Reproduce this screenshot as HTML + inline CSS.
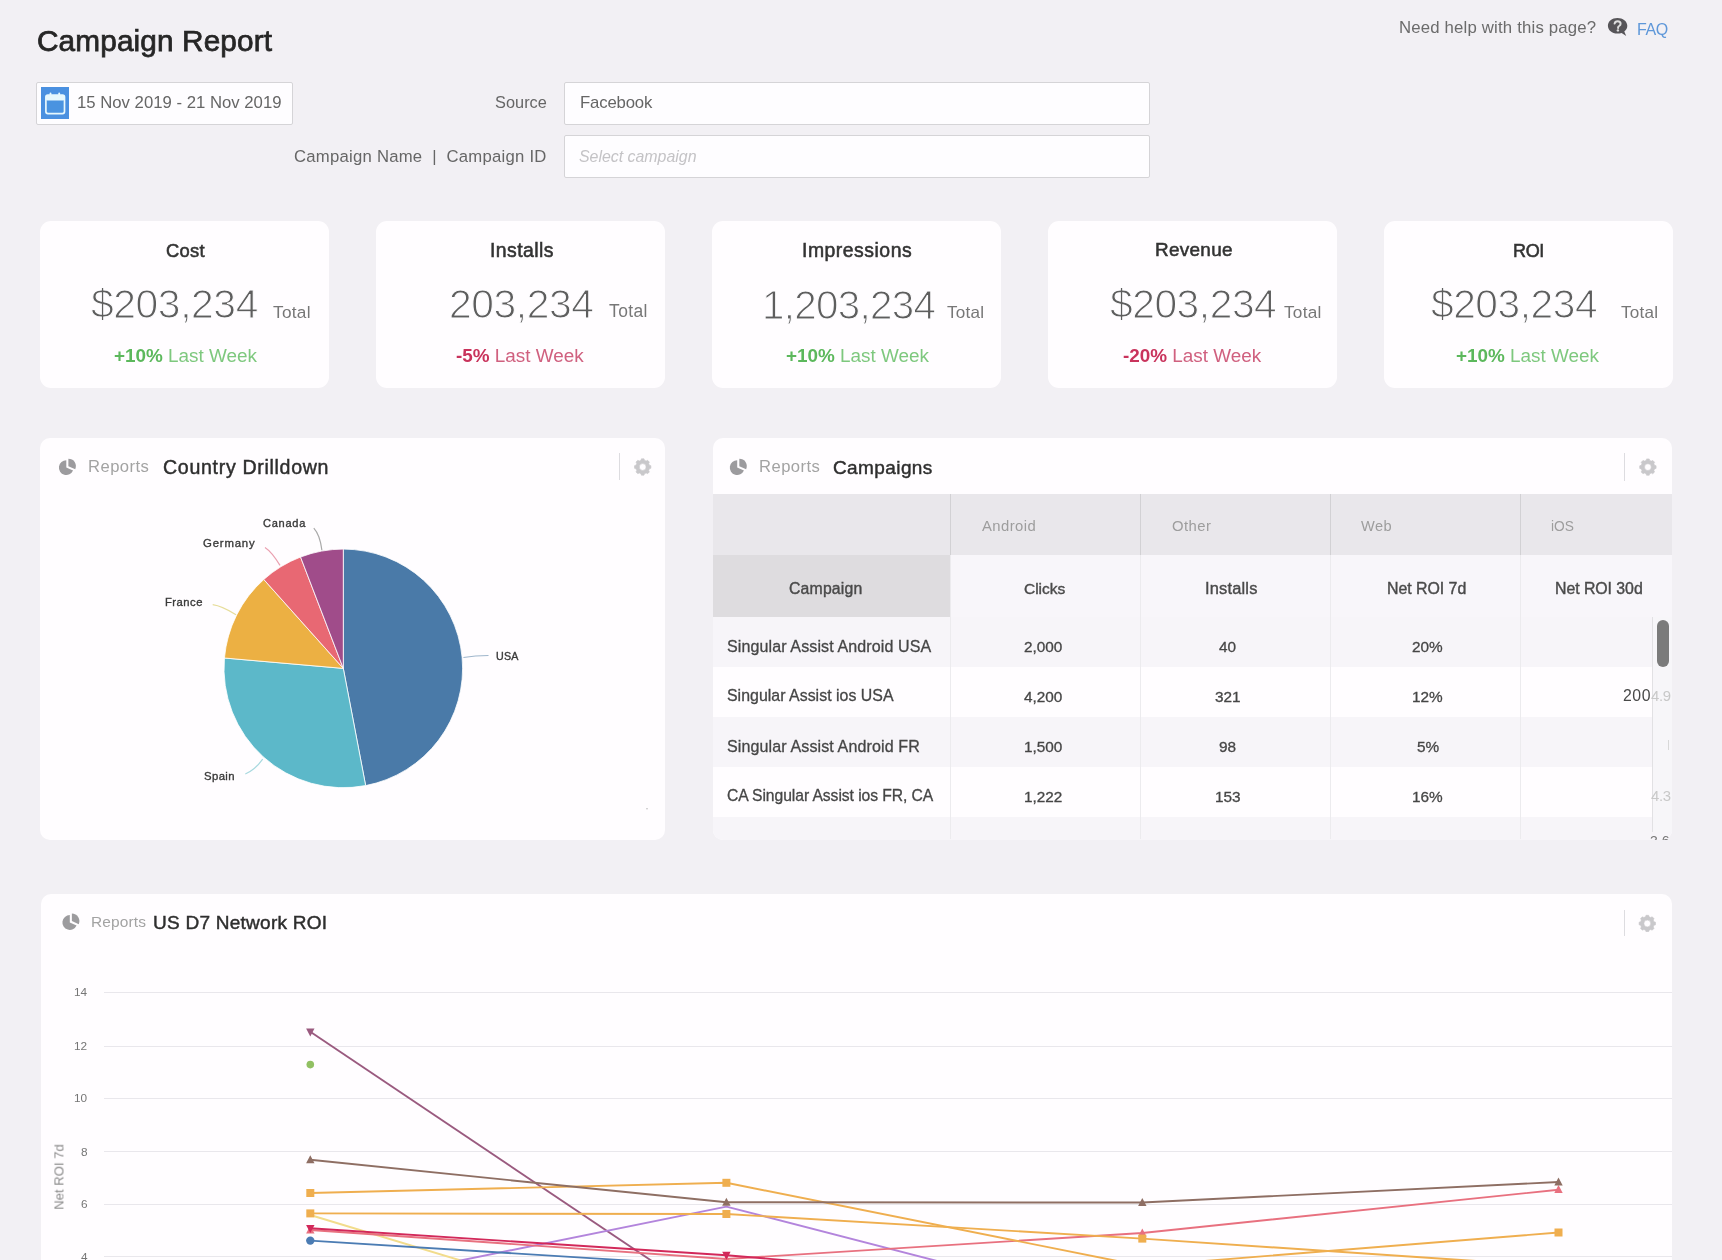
<!DOCTYPE html>
<html><head><meta charset="utf-8"><style>
html,body{margin:0;padding:0;}
body{width:1722px;height:1260px;overflow:hidden;background:#f2f0f4;position:relative;font-family:"Liberation Sans",sans-serif;}
.t{position:absolute;white-space:nowrap;line-height:1;-webkit-font-smoothing:antialiased;will-change:transform;}
.r{position:absolute;}
</style></head><body>
<div class="t" style="left:37.20px;top:26.41px;font-size:29.75px;color:#262626;letter-spacing:0.130px;-webkit-text-stroke:0.75px #262626;">Campaign Report</div>
<div class="t" style="left:1399.00px;top:20.29px;font-size:16.78px;color:#6b6b6b;letter-spacing:0.173px;">Need help with this page?</div>
<svg class="r" style="left:1606px;top:16px;will-change:transform" width="24" height="22" viewBox="0 0 24 22"><path d="M11.4 2C6 2 1.9 5.3 1.9 9.8c0 4.4 4.1 7.8 9.5 7.8 1.6 0 2.9-.3 4.2-.7l4.6 3-1.9-4.4c1.9-1.4 3-3.4 3-5.7C21.3 5.3 16.8 2 11.4 2z" fill="#575559"/><path d="M8.6 7.6c.3-1.6 1.5-2.4 3-2.4 1.8 0 3 1 3 2.5 0 1.2-.7 1.8-1.5 2.3-.7.4-1 .8-1 1.6v.4" stroke="#dedede" stroke-width="2" fill="none" stroke-linecap="round"/><circle cx="11.9" cy="14.4" r="1.2" fill="#dedede"/></svg>
<div class="t" style="left:1637.30px;top:20.93px;font-size:16.03px;color:#5e97d9;letter-spacing:-0.391px;">FAQ</div>
<div class="r" style="left:36px;top:82px;width:257px;height:43px;background:#fefdff;border:1px solid #d5d4d7;box-sizing:border-box;border-radius:2px;"></div>
<div class="r" style="left:40.5px;top:87.3px;width:28.299999999999997px;height:32.0px;background:#4a90e0;"></div>
<svg class="r" style="left:41px;top:87px" width="28" height="32" viewBox="0 0 28 32"><rect x="4.9" y="8" width="18.6" height="18.6" rx="2" fill="#4a93e0" stroke="#e6f7fd" stroke-width="1.7"/><rect x="4.9" y="8" width="18.6" height="5.5" rx="1.5" fill="#e6f7fd"/><rect x="8.6" y="5.6" width="1.8" height="4.4" rx="0.9" fill="#e6f7fd"/><rect x="17.3" y="5.6" width="1.8" height="4.4" rx="0.9" fill="#e6f7fd"/></svg>
<div class="t" style="left:76.60px;top:95.04px;font-size:16.73px;color:#666;">15 Nov 2019 - 21 Nov 2019</div>
<div class="t" style="left:494.50px;top:94.39px;font-size:16.31px;color:#666;letter-spacing:0.044px;">Source</div>
<div class="t" style="left:293.70px;top:148.56px;font-size:16.71px;color:#666;letter-spacing:0.244px;">Campaign Name&nbsp;&nbsp;|&nbsp;&nbsp;Campaign ID</div>
<div class="r" style="left:564px;top:82px;width:585.5px;height:43px;background:#fefdff;border:1px solid #d5d4d7;box-sizing:border-box;border-radius:2px;"></div>
<div class="r" style="left:564px;top:135px;width:585.5px;height:43px;background:#fefdff;border:1px solid #d5d4d7;box-sizing:border-box;border-radius:2px;"></div>
<div class="t" style="left:580.10px;top:95.23px;font-size:16.74px;color:#666;letter-spacing:-0.166px;">Facebook</div>
<div class="t" style="left:579.40px;top:149.01px;font-size:15.93px;color:#c4c3c6;font-style:italic;letter-spacing:-0.014px;">Select campaign</div>
<div class="r" style="left:40px;top:221px;width:289px;height:167px;background:#fffdff;border-radius:11px;"></div>
<div class="t" style="left:165.91px;top:241.84px;font-size:18.38px;color:#333;letter-spacing:0.304px;-webkit-text-stroke:0.55px #333;">Cost</div>
<div class="t" style="left:91.20px;top:284.33px;font-size:40.84px;color:#5e5e5e;letter-spacing:-0.421px;-webkit-text-stroke:1.1px #fefdff;">$203,234</div>
<div class="t" style="left:273.00px;top:303.61px;font-size:17.24px;color:#777;letter-spacing:0.275px;">Total</div>
<div class="t" style="left:113.70px;top:347.21px;font-size:18.90px;color:#7ec87e;"><b style="color:#5cb85c">+10%</b> Last Week</div>
<div class="r" style="left:376px;top:221px;width:289px;height:167px;background:#fffdff;border-radius:11px;"></div>
<div class="t" style="left:489.57px;top:240.96px;font-size:19.42px;color:#333;letter-spacing:0.426px;-webkit-text-stroke:0.55px #333;">Installs</div>
<div class="t" style="left:449.00px;top:284.34px;font-size:40.83px;color:#5e5e5e;letter-spacing:-0.433px;-webkit-text-stroke:1.1px #fefdff;">203,234</div>
<div class="t" style="left:609.00px;top:303.41px;font-size:17.47px;color:#777;letter-spacing:0.400px;">Total</div>
<div class="t" style="left:456.00px;top:347.21px;font-size:18.90px;color:#d0607f;"><b style="color:#c9335c">-5%</b> Last Week</div>
<div class="r" style="left:712px;top:221px;width:289px;height:167px;background:#fffdff;border-radius:11px;"></div>
<div class="t" style="left:801.80px;top:240.97px;font-size:19.40px;color:#333;letter-spacing:0.509px;-webkit-text-stroke:0.55px #333;">Impressions</div>
<div class="t" style="left:762.00px;top:284.76px;font-size:40.33px;color:#5e5e5e;letter-spacing:-0.678px;-webkit-text-stroke:1.1px #fefdff;">1,203,234</div>
<div class="t" style="left:947.00px;top:303.71px;font-size:17.12px;color:#777;letter-spacing:0.212px;">Total</div>
<div class="t" style="left:786.00px;top:347.21px;font-size:18.90px;color:#7ec87e;"><b style="color:#5cb85c">+10%</b> Last Week</div>
<div class="r" style="left:1048px;top:221px;width:289px;height:167px;background:#fffdff;border-radius:11px;"></div>
<div class="t" style="left:1154.50px;top:241.39px;font-size:18.91px;color:#333;letter-spacing:0.301px;-webkit-text-stroke:0.55px #333;">Revenue</div>
<div class="t" style="left:1110.00px;top:284.39px;font-size:40.77px;color:#5e5e5e;letter-spacing:-0.464px;-webkit-text-stroke:1.1px #fefdff;">$203,234</div>
<div class="t" style="left:1284.00px;top:303.63px;font-size:17.21px;color:#777;letter-spacing:0.262px;">Total</div>
<div class="t" style="left:1123.00px;top:347.21px;font-size:18.90px;color:#d0607f;"><b style="color:#c9335c">-20%</b> Last Week</div>
<div class="r" style="left:1384px;top:221px;width:289px;height:167px;background:#fffdff;border-radius:11px;"></div>
<div class="t" style="left:1513.00px;top:242.14px;font-size:18.03px;color:#333;letter-spacing:-0.380px;-webkit-text-stroke:0.55px #333;">ROI</div>
<div class="t" style="left:1431.00px;top:284.41px;font-size:40.74px;color:#5e5e5e;letter-spacing:-0.478px;-webkit-text-stroke:1.1px #fefdff;">$203,234</div>
<div class="t" style="left:1621.00px;top:303.71px;font-size:17.12px;color:#777;letter-spacing:0.212px;">Total</div>
<div class="t" style="left:1456.40px;top:347.21px;font-size:18.90px;color:#7ec87e;"><b style="color:#5cb85c">+10%</b> Last Week</div>
<div class="r" style="left:40px;top:438px;width:625px;height:402px;background:#fffdff;border-radius:10px;"></div>
<div class="r" style="left:713px;top:438px;width:959px;height:402px;background:#fffdff;border-radius:10px;"></div>
<div class="r" style="left:41px;top:894px;width:1631px;height:406px;background:#fffdff;border-radius:10px;"></div>
<svg class="r" style="left:0;top:0;overflow:visible" width="1" height="1"><path d="M66.30 467.60L73.06 470.61A7.4 7.4 0 1 1 66.30 460.20Z" fill="#9c9b9e"/><path d="M68.40 466.20L68.40 458.70A7.5 7.5 0 0 1 75.25 469.25Z" fill="#9c9b9e"/></svg>
<div class="t" style="left:88.40px;top:458.92px;font-size:16.63px;color:#a3a3a3;letter-spacing:0.461px;">Reports</div>
<div class="t" style="left:162.80px;top:457.61px;font-size:19.60px;color:#2e2e2e;letter-spacing:0.678px;-webkit-text-stroke:0.45px #2e2e2e;">Country Drilldown</div>
<div class="r" style="left:619.1px;top:453px;width:1.2000000000000455px;height:27px;background:#dddce0;"></div>
<svg class="r" style="left:0;top:0;overflow:visible" width="1" height="1"><path d="M640.91 460.34 L641.40 458.80 L644.00 458.80 L644.49 460.34 L646.15 461.02 L647.58 460.29 L649.41 462.12 L648.68 463.55 L649.36 465.21 L650.90 465.70 L650.90 468.30 L649.36 468.79 L648.68 470.45 L649.41 471.88 L647.58 473.71 L646.15 472.98 L644.49 473.66 L644.00 475.20 L641.40 475.20 L640.91 473.66 L639.25 472.98 L637.82 473.71 L635.99 471.88 L636.72 470.45 L636.04 468.79 L634.50 468.30 L634.50 465.70 L636.04 465.21 L636.72 463.55 L635.99 462.12 L637.82 460.29 L639.25 461.02Z M646.1 467 A3.4 3.4 0 1 0 639.3000000000001 467 A3.4 3.4 0 1 0 646.1 467Z" fill="#c9c8cb" fill-rule="evenodd" stroke="#c9c8cb" stroke-width="0.6" stroke-linejoin="round"/></svg>
<svg class="r" style="left:0;top:0;overflow:visible" width="1" height="1"><path d="M737.20 467.60L743.96 470.61A7.4 7.4 0 1 1 737.20 460.20Z" fill="#9c9b9e"/><path d="M739.30 466.20L739.30 458.70A7.5 7.5 0 0 1 746.15 469.25Z" fill="#9c9b9e"/></svg>
<div class="t" style="left:759.30px;top:458.93px;font-size:16.62px;color:#a3a3a3;letter-spacing:0.453px;">Reports</div>
<div class="t" style="left:832.80px;top:458.22px;font-size:19.00px;color:#2e2e2e;letter-spacing:0.402px;-webkit-text-stroke:0.45px #2e2e2e;">Campaigns</div>
<div class="r" style="left:1624.2px;top:453px;width:1.199999999999818px;height:28px;background:#dddce0;"></div>
<svg class="r" style="left:0;top:0;overflow:visible" width="1" height="1"><path d="M1646.11 460.44 L1646.60 458.90 L1649.20 458.90 L1649.69 460.44 L1651.35 461.12 L1652.78 460.39 L1654.61 462.22 L1653.88 463.65 L1654.56 465.31 L1656.10 465.80 L1656.10 468.40 L1654.56 468.89 L1653.88 470.55 L1654.61 471.98 L1652.78 473.81 L1651.35 473.08 L1649.69 473.76 L1649.20 475.30 L1646.60 475.30 L1646.11 473.76 L1644.45 473.08 L1643.02 473.81 L1641.19 471.98 L1641.92 470.55 L1641.24 468.89 L1639.70 468.40 L1639.70 465.80 L1641.24 465.31 L1641.92 463.65 L1641.19 462.22 L1643.02 460.39 L1644.45 461.12Z M1651.3000000000002 467.1 A3.4 3.4 0 1 0 1644.5 467.1 A3.4 3.4 0 1 0 1651.3000000000002 467.1Z" fill="#c9c8cb" fill-rule="evenodd" stroke="#c9c8cb" stroke-width="0.6" stroke-linejoin="round"/></svg>
<svg class="r" style="left:0;top:0;overflow:visible" width="1" height="1"><path d="M69.80 922.50L76.56 925.51A7.4 7.4 0 1 1 69.80 915.10Z" fill="#9c9b9e"/><path d="M71.90 921.10L71.90 913.60A7.5 7.5 0 0 1 78.75 924.15Z" fill="#9c9b9e"/></svg>
<div class="t" style="left:90.50px;top:914.40px;font-size:15.47px;color:#a3a3a3;letter-spacing:0.122px;">Reports</div>
<div class="t" style="left:153.20px;top:913.07px;font-size:19.05px;color:#2e2e2e;letter-spacing:0.240px;-webkit-text-stroke:0.45px #2e2e2e;">US D7 Network ROI</div>
<div class="r" style="left:1624.2px;top:910px;width:1.199999999999818px;height:26px;background:#dddce0;"></div>
<svg class="r" style="left:0;top:0;overflow:visible" width="1" height="1"><path d="M1645.51 916.84 L1646.00 915.30 L1648.60 915.30 L1649.09 916.84 L1650.75 917.52 L1652.18 916.79 L1654.01 918.62 L1653.28 920.05 L1653.96 921.71 L1655.50 922.20 L1655.50 924.80 L1653.96 925.29 L1653.28 926.95 L1654.01 928.38 L1652.18 930.21 L1650.75 929.48 L1649.09 930.16 L1648.60 931.70 L1646.00 931.70 L1645.51 930.16 L1643.85 929.48 L1642.42 930.21 L1640.59 928.38 L1641.32 926.95 L1640.64 925.29 L1639.10 924.80 L1639.10 922.20 L1640.64 921.71 L1641.32 920.05 L1640.59 918.62 L1642.42 916.79 L1643.85 917.52Z M1650.7 923.5 A3.4 3.4 0 1 0 1643.8999999999999 923.5 A3.4 3.4 0 1 0 1650.7 923.5Z" fill="#c9c8cb" fill-rule="evenodd" stroke="#c9c8cb" stroke-width="0.6" stroke-linejoin="round"/></svg>
<svg class="r" style="left:0;top:0;overflow:visible" width="1" height="1"><path d="M343.3 668.4L343.30 549.10A119.3 119.3 0 0 1 365.65 785.59Z" fill="#4a7aa8" stroke="#fff" stroke-width="0.8" stroke-linejoin="round"/><path d="M343.3 668.4L365.65 785.59A119.3 119.3 0 0 1 224.45 658.00Z" fill="#5cb8c9" stroke="#fff" stroke-width="0.8" stroke-linejoin="round"/><path d="M343.3 668.4L224.45 658.00A119.3 119.3 0 0 1 263.78 579.46Z" fill="#ecb043" stroke="#fff" stroke-width="0.8" stroke-linejoin="round"/><path d="M343.3 668.4L263.78 579.46A119.3 119.3 0 0 1 300.55 557.02Z" fill="#e86873" stroke="#fff" stroke-width="0.8" stroke-linejoin="round"/><path d="M343.3 668.4L300.55 557.02A119.3 119.3 0 0 1 343.30 549.10Z" fill="#a04c8a" stroke="#fff" stroke-width="0.8" stroke-linejoin="round"/><path d="M313.8 528.2 Q320 535 321.9 550.3" stroke="#a9a9a9" stroke-width="1.2" fill="none"/><path d="M265 547.4 Q272 552 280 565.4" stroke="#eaa0b0" stroke-width="1.2" fill="none"/><path d="M212.7 604.7 Q222 606 236 614.8" stroke="#e6dd9a" stroke-width="1.2" fill="none"/><path d="M463.4 657.5 Q475 655.5 488.5 655.5" stroke="#9fb6cc" stroke-width="1.2" fill="none"/><path d="M245.3 774 Q255 770 262.7 759.2" stroke="#a8d9df" stroke-width="1.2" fill="none"/><circle cx="647" cy="808.8" r="0.8" fill="#bbb"/></svg>
<div class="t" style="left:262.70px;top:517.95px;font-size:11.05px;color:#3a3a3a;letter-spacing:0.716px;-webkit-text-stroke:0.35px #3a3a3a;">Canada</div>
<div class="t" style="left:202.80px;top:538.07px;font-size:11.37px;color:#3a3a3a;letter-spacing:0.824px;-webkit-text-stroke:0.35px #3a3a3a;">Germany</div>
<div class="t" style="left:165.10px;top:597.38px;font-size:11.24px;color:#3a3a3a;letter-spacing:0.483px;-webkit-text-stroke:0.35px #3a3a3a;">France</div>
<div class="t" style="left:495.60px;top:650.94px;font-size:10.70px;color:#3a3a3a;letter-spacing:0.249px;-webkit-text-stroke:0.35px #3a3a3a;">USA</div>
<div class="t" style="left:203.80px;top:770.69px;font-size:11.35px;color:#3a3a3a;letter-spacing:0.393px;-webkit-text-stroke:0.35px #3a3a3a;">Spain</div>
<div class="r" style="left:713px;top:494px;width:959px;height:60.5px;background:#e9e7eb;"></div>
<div class="r" style="left:949.5px;top:494px;width:1.2000000000000455px;height:60.5px;background:#d2d1d4;"></div>
<div class="r" style="left:1139.5px;top:494px;width:1.2000000000000455px;height:60.5px;background:#d2d1d4;"></div>
<div class="r" style="left:1329.5px;top:494px;width:1.2000000000000455px;height:60.5px;background:#d2d1d4;"></div>
<div class="r" style="left:1519.5px;top:494px;width:1.2000000000000455px;height:60.5px;background:#d2d1d4;"></div>
<div class="r" style="left:713px;top:554.5px;width:236.5px;height:62.5px;background:#dedcdf;"></div>
<div class="r" style="left:949.5px;top:554.5px;width:722.5px;height:62.5px;background:#f8f6fa;"></div>
<div class="r" style="left:713px;top:617px;width:959px;height:50px;background:#f7f5f9;"></div>
<div class="r" style="left:713px;top:667px;width:959px;height:50px;background:#fffdff;"></div>
<div class="r" style="left:713px;top:717px;width:959px;height:50px;background:#f7f5f9;"></div>
<div class="r" style="left:713px;top:767px;width:959px;height:50px;background:#fffdff;"></div>
<div class="r" style="left:713px;top:817px;width:959px;height:23px;background:#f7f5f9;border-radius:0 0 10px 10px;"></div>
<div class="r" style="left:949.5px;top:554.5px;width:1.0px;height:284.5px;background:#ecebee;"></div>
<div class="r" style="left:1139.5px;top:554.5px;width:1.0px;height:284.5px;background:#ecebee;"></div>
<div class="r" style="left:1329.5px;top:554.5px;width:1.0px;height:284.5px;background:#ecebee;"></div>
<div class="r" style="left:1519.5px;top:554.5px;width:1.0px;height:284.5px;background:#ecebee;"></div>
<div class="r" style="left:1652.5px;top:617px;width:19.5px;height:215px;background:#f7f6f9;"></div>
<div class="r" style="left:1651.5px;top:617px;width:1.2000000000000455px;height:215px;background:#e2e1e4;"></div>
<div class="r" style="left:1657px;top:620px;width:12px;height:47px;background:#7b7b7b;border-radius:6px;"></div>
<div class="t" style="left:982.00px;top:518.63px;font-size:14.85px;color:#9d9d9d;letter-spacing:0.433px;">Android</div>
<div class="t" style="left:1171.50px;top:518.63px;font-size:14.85px;color:#9d9d9d;letter-spacing:0.467px;">Other</div>
<div class="t" style="left:1360.60px;top:518.86px;font-size:14.58px;color:#9d9d9d;letter-spacing:0.492px;">Web</div>
<div class="t" style="left:1551.00px;top:519.56px;font-size:13.75px;color:#9d9d9d;letter-spacing:0.040px;">iOS</div>
<div class="t" style="left:788.70px;top:580.92px;font-size:15.81px;color:#4a4a4a;letter-spacing:0.177px;-webkit-text-stroke:0.4px #4a4a4a;">Campaign</div>
<div class="t" style="left:1023.80px;top:581.19px;font-size:15.49px;color:#4a4a4a;letter-spacing:-0.024px;-webkit-text-stroke:0.4px #4a4a4a;">Clicks</div>
<div class="t" style="left:1205.40px;top:580.41px;font-size:16.41px;color:#4a4a4a;letter-spacing:0.189px;-webkit-text-stroke:0.4px #4a4a4a;">Installs</div>
<div class="t" style="left:1387.00px;top:580.82px;font-size:15.92px;color:#4a4a4a;letter-spacing:-0.037px;-webkit-text-stroke:0.4px #4a4a4a;">Net ROI 7d</div>
<div class="t" style="left:1554.80px;top:580.85px;font-size:15.89px;color:#4a4a4a;letter-spacing:-0.053px;-webkit-text-stroke:0.4px #4a4a4a;">Net ROI 30d</div>
<div class="t" style="left:726.60px;top:638.12px;font-size:16.05px;color:#464646;letter-spacing:0.109px;-webkit-text-stroke:0.3px #464646;">Singular Assist Android USA</div>
<div class="t" style="left:1024.10px;top:638.71px;font-size:15.35px;color:#464646;-webkit-text-stroke:0.3px #464646;">2,000</div>
<div class="t" style="left:1219.47px;top:638.71px;font-size:15.35px;color:#464646;-webkit-text-stroke:0.3px #464646;">40</div>
<div class="t" style="left:1412.44px;top:638.71px;font-size:15.35px;color:#464646;-webkit-text-stroke:0.3px #464646;">20%</div>
<div class="t" style="left:726.60px;top:688.26px;font-size:15.88px;color:#464646;letter-spacing:0.030px;-webkit-text-stroke:0.3px #464646;">Singular Assist ios USA</div>
<div class="t" style="left:1024.10px;top:688.71px;font-size:15.35px;color:#464646;-webkit-text-stroke:0.3px #464646;">4,200</div>
<div class="t" style="left:1215.20px;top:688.71px;font-size:15.35px;color:#464646;-webkit-text-stroke:0.3px #464646;">321</div>
<div class="t" style="left:1412.44px;top:688.71px;font-size:15.35px;color:#464646;-webkit-text-stroke:0.3px #464646;">12%</div>
<div class="t" style="left:726.60px;top:738.11px;font-size:16.06px;color:#464646;letter-spacing:0.112px;-webkit-text-stroke:0.3px #464646;">Singular Assist Android FR</div>
<div class="t" style="left:1024.10px;top:738.71px;font-size:15.35px;color:#464646;-webkit-text-stroke:0.3px #464646;">1,500</div>
<div class="t" style="left:1219.47px;top:738.71px;font-size:15.35px;color:#464646;-webkit-text-stroke:0.3px #464646;">98</div>
<div class="t" style="left:1416.71px;top:738.71px;font-size:15.35px;color:#464646;-webkit-text-stroke:0.3px #464646;">5%</div>
<div class="t" style="left:726.60px;top:788.43px;font-size:15.68px;color:#464646;letter-spacing:-0.066px;-webkit-text-stroke:0.3px #464646;">CA Singular Assist ios FR, CA</div>
<div class="t" style="left:1024.10px;top:788.71px;font-size:15.35px;color:#464646;-webkit-text-stroke:0.3px #464646;">1,222</div>
<div class="t" style="left:1215.20px;top:788.71px;font-size:15.35px;color:#464646;-webkit-text-stroke:0.3px #464646;">153</div>
<div class="t" style="left:1412.44px;top:788.71px;font-size:15.35px;color:#464646;-webkit-text-stroke:0.3px #464646;">16%</div>
<div class="t" style="left:1622.50px;top:688.09px;font-size:15.84px;color:#484848;letter-spacing:0.542px;">200</div>
<div class="t" style="left:1651.00px;top:688.89px;font-size:14.90px;color:#c8c8c8;letter-spacing:-0.354px;">4.9</div>
<div class="t" style="left:1651.00px;top:788.69px;font-size:14.90px;color:#c8c8c8;letter-spacing:-0.354px;">4.3</div>
<div class="r" style="left:1667.5px;top:740px;width:1.2000000000000455px;height:10px;background:#d8d8d8;"></div>
<div class="r" style="left:1650px;top:834px;width:22px;height:6px;overflow:hidden"><div class="t" style="left:0;top:0;font-size:14px;color:#777;">3.6</div></div>
<div class="r" style="left:103.8px;top:991.7px;width:1568.2px;height:1.0px;background:#e9e7ec;"></div>
<div class="r" style="left:103.8px;top:1045.7px;width:1568.2px;height:1.0px;background:#e9e7ec;"></div>
<div class="r" style="left:103.8px;top:1097.9px;width:1568.2px;height:1.0px;background:#e9e7ec;"></div>
<div class="r" style="left:103.8px;top:1151.3px;width:1568.2px;height:1.0px;background:#e9e7ec;"></div>
<div class="r" style="left:103.8px;top:1203.7px;width:1568.2px;height:1.0px;background:#e9e7ec;"></div>
<div class="r" style="left:103.8px;top:1256.2px;width:1568.2px;height:1.0px;background:#e9e7ec;"></div>
<div class="t" style="left:74.18px;top:987.11px;font-size:11.80px;color:#767676;">14</div>
<div class="t" style="left:74.18px;top:1041.11px;font-size:11.80px;color:#767676;">12</div>
<div class="t" style="left:74.18px;top:1093.31px;font-size:11.80px;color:#767676;">10</div>
<div class="t" style="left:80.74px;top:1146.71px;font-size:11.80px;color:#767676;">8</div>
<div class="t" style="left:80.74px;top:1199.11px;font-size:11.80px;color:#767676;">6</div>
<div class="t" style="left:80.74px;top:1251.61px;font-size:11.80px;color:#767676;">4</div>
<div class="t" style="left:58.5px;top:1177px;font-size:13.1px;color:#8a8a8a;transform:translate(-50%,-50%) rotate(-90deg);transform-origin:center;">Net ROI 7d</div>
<svg class="r" style="left:0;top:0;overflow:visible" width="1" height="1"><path d="M310.3 1031.8 L726.4 1311.0" stroke="#9a5a7f" stroke-width="1.9" fill="none" stroke-linejoin="round"/><path d="M310.3 1036.3999999999999 L314.5 1028.3999999999999 L306.1 1028.3999999999999Z" fill="#9a5a7f"/><path d="M310.3 1215.0 L726.4 1341.0" stroke="#f2dc8c" stroke-width="1.9" fill="none" stroke-linejoin="round"/><path d="M310.3 1291.0 L726.4 1206.6 L1142.3 1314.0" stroke="#b384dc" stroke-width="1.9" fill="none" stroke-linejoin="round"/><path d="M310.3 1240.6 L726.4 1266.6" stroke="#4b7bb3" stroke-width="1.9" fill="none" stroke-linejoin="round"/><circle cx="310.3" cy="1240.6" r="4.2" fill="#4b7bb3"/><path d="M310.3 1230.0 L726.4 1259.0 L1142.3 1233.0 L1558.5 1189.7" stroke="#e8707f" stroke-width="1.9" fill="none" stroke-linejoin="round"/><path d="M310.3 1225.4 L314.5 1233.4 L306.1 1233.4Z" fill="#e8707f"/><path d="M726.4 1254.4 L730.6 1262.4 L722.1999999999999 1262.4Z" fill="#e8707f"/><path d="M1142.3 1228.4 L1146.5 1236.4 L1138.1 1236.4Z" fill="#e8707f"/><path d="M1558.5 1185.1000000000001 L1562.7 1193.1000000000001 L1554.3 1193.1000000000001Z" fill="#e8707f"/><path d="M310.3 1228.3 L726.4 1255.2 L1142.3 1290.0" stroke="#d2285a" stroke-width="1.9" fill="none" stroke-linejoin="round"/><path d="M310.3 1232.8999999999999 L314.5 1224.8999999999999 L306.1 1224.8999999999999Z" fill="#d2285a"/><path d="M726.4 1259.8 L730.6 1251.8 L722.1999999999999 1251.8Z" fill="#d2285a"/><path d="M310.3 1213.4 L726.4 1214.0 L1142.3 1238.6 L1558.5 1266.5" stroke="#efae4f" stroke-width="1.9" fill="none" stroke-linejoin="round"/><rect x="306.3" y="1209.4" width="8" height="8" fill="#efae4f"/><rect x="722.4" y="1210.0" width="8" height="8" fill="#efae4f"/><rect x="1138.3" y="1234.6" width="8" height="8" fill="#efae4f"/><path d="M310.3 1193.0 L726.4 1182.8 L1142.3 1266.0 L1558.5 1232.5" stroke="#efae4f" stroke-width="1.9" fill="none" stroke-linejoin="round"/><rect x="306.3" y="1189.0" width="8" height="8" fill="#efae4f"/><rect x="722.4" y="1178.8" width="8" height="8" fill="#efae4f"/><rect x="1554.5" y="1228.5" width="8" height="8" fill="#efae4f"/><path d="M310.3 1159.8 L726.4 1202.3 L1142.3 1202.5 L1558.5 1182.0" stroke="#8e6e63" stroke-width="1.9" fill="none" stroke-linejoin="round"/><path d="M310.3 1155.2 L314.5 1163.2 L306.1 1163.2Z" fill="#8e6e63"/><path d="M726.4 1197.7 L730.6 1205.7 L722.1999999999999 1205.7Z" fill="#8e6e63"/><path d="M1142.3 1197.9 L1146.5 1205.9 L1138.1 1205.9Z" fill="#8e6e63"/><path d="M1558.5 1177.4 L1562.7 1185.4 L1554.3 1185.4Z" fill="#8e6e63"/><circle cx="310.3" cy="1064.6" r="3.8" fill="#91c063"/></svg>
</body></html>
